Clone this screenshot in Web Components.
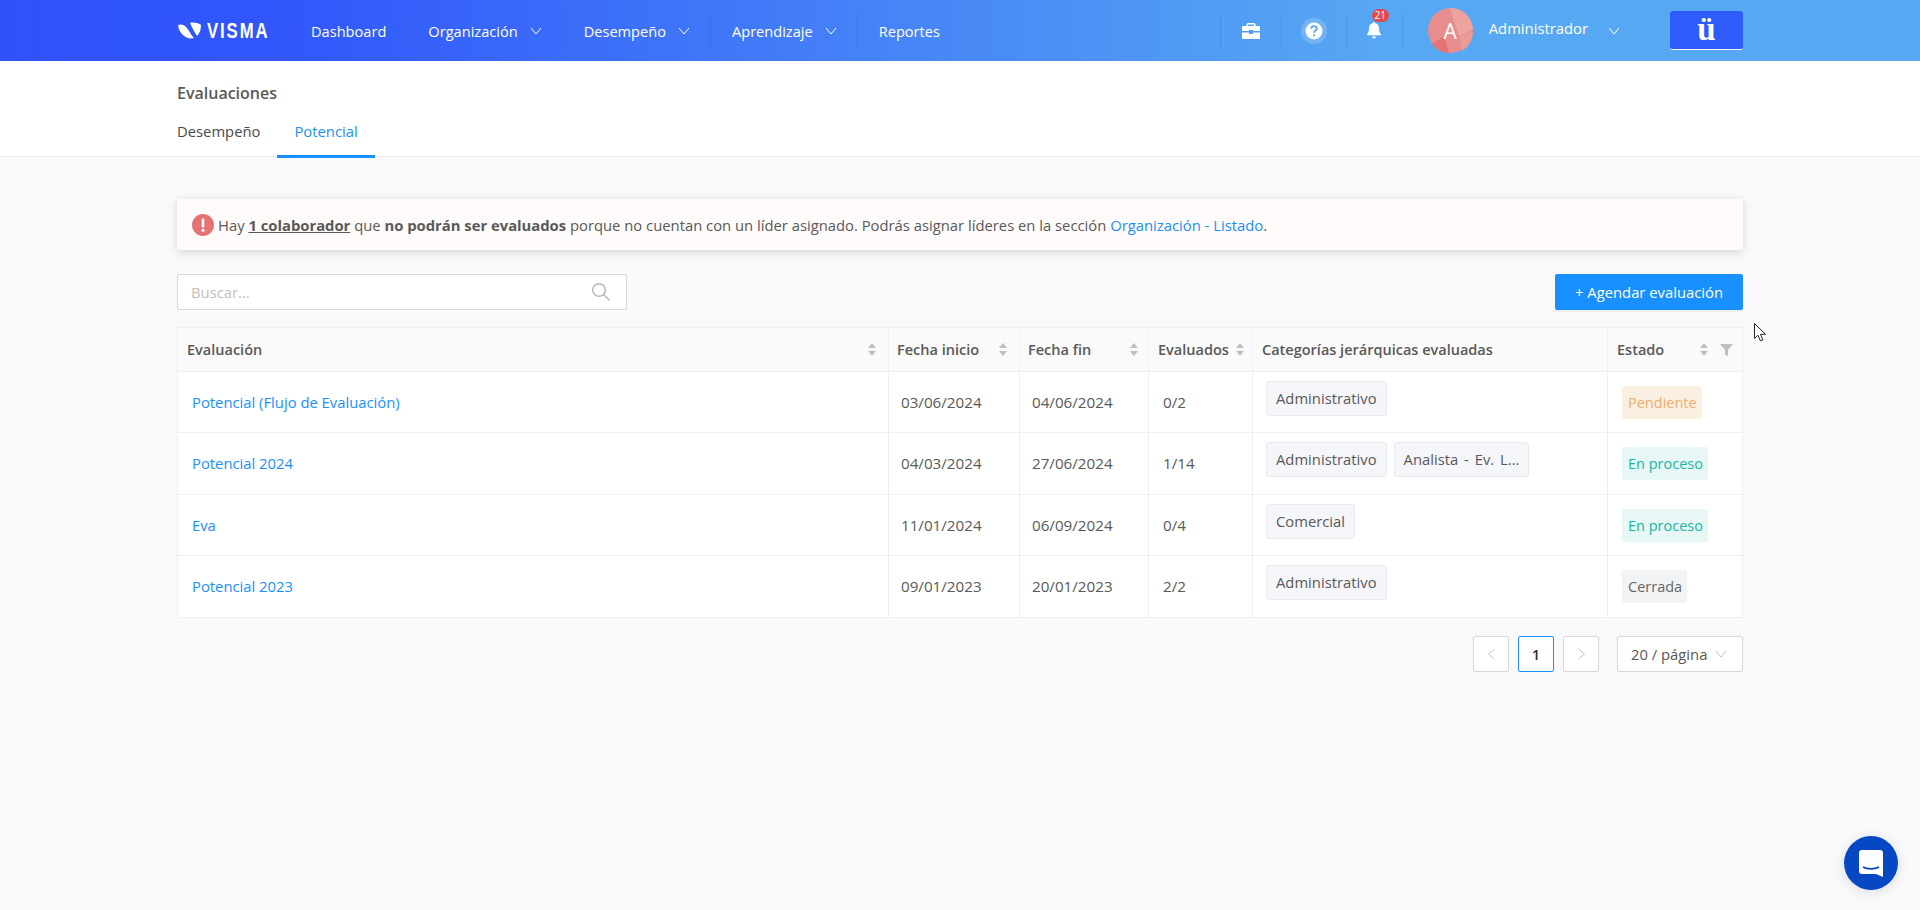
<!DOCTYPE html>
<html lang="es">
<head>
<meta charset="utf-8">
<title>Evaluaciones</title>
<style>
    html, body { margin: 0; height: 100%; }
    body {
        background: #f9f9fb;
        color: #595959;
        font-family: "Open Sans", "Noto Sans", "Liberation Sans", sans-serif;
        font-size: 14.8px;
        overflow: hidden;
    }
</style>
</head>
<body>
<app-header></app-header>
<page-title heading="Evaluaciones"></page-title>
<main-content>
    <alert-banner>
        Hay <u><b>1 colaborador</b></u> que <b>no podrán ser evaluados</b> porque no cuentan con un líder asignado. Podrás asignar líderes en la sección <a>Organización - Listado</a>.
    </alert-banner>
    <search-toolbar></search-toolbar>
    <eval-table></eval-table>
    <page-nav></page-nav>
</main-content>
<chat-fab></chat-fab>
<mouse-cursor></mouse-cursor>

<script>
const CHEVRON = `<svg width="12" height="8" viewBox="0 0 12 8" fill="none" stroke="currentColor" stroke-width="1"><path d="M1 1l5 6 5-6"/></svg>`;

//top bar with logo, menu and user box
class AppHeader extends HTMLElement {
    connectedCallback() {
        const shadow = this.attachShadow({mode: "open"});
        shadow.innerHTML = `
        <style>
            :host {
                display: flex;
                height: 61px;
                padding: 0 177px;
                align-items: center;
                color: #fff;
                background: linear-gradient(90deg, #2f51fc 0%, #3157fb 15%, #57a8f3 72%, #57a8f3 100%);
            }
            .logo { display: flex; align-items: center; gap: 5px; width: 113px; }
            .logo span {
                font: bold 22px "Liberation Sans", sans-serif;
                letter-spacing: 2.500px;
                display: inline-block;
                transform: scaleX(.76);
                transform-origin: left center;
            }
            .item {
                display: flex;
                align-items: center;
                height: 34px;
                padding: 1px 20px 0 21px;
                gap: 12px;
                border-right: 1px solid rgba(40, 80, 200, .22);
                box-sizing: border-box;
                font-size: 14.6px;
            }
            .item.end { border-right: 0; }
            .spacer { flex: 1; }
            .icon {
                width: 61px;
                height: 34px;
                display: flex;
                align-items: center;
                justify-content: center;
                border-left: 1px solid rgba(40, 80, 200, .18);
                position: relative;
                box-sizing: border-box;
            }
            .icon.bell { width: 56px; }
            .icon.help { width: 65px; }
            .badge {
                position: absolute;
                left: 25px;
                top: -5px;
                min-width: 17px;
                height: 13px;
                line-height: 13px;
                border-radius: 7px;
                background: #e5484d;
                font-size: 10px;
                text-align: center;
            }
            .user { display: flex; align-items: center; }
            .name { margin-bottom: 5px; display: flex; align-items: center; }
            .avatar { position: relative; width: 45px; height: 45px; margin-right: 16px; }
            .avatar svg { display: block; }
            .avatar span {
                position: absolute;
                inset: 0;
                display: flex;
                align-items: center;
                justify-content: center;
                font-size: 21px;
            }
            .chev { margin-left: 20px; margin-top: 6px; display: flex; }
            .uu {
                width: 73px;
                height: 39px;
                margin-left: 50px;
                box-sizing: border-box;
                background: #2f5bfb;
                border-bottom: 1px solid #fff;
                border-radius: 3px;
                font: bold 33px/36px "Liberation Serif", serif;
                text-align: center;
            }
        </style>
        <div class="logo">
            <svg width="25" height="17" viewBox="0 0 25 17"><path fill="#fff" d="M1 3C6 1 10 5 12 9c2 3 3 5 5 7C10 18 2 12 1 3z"/><path fill="#fff" d="M13 1c4-1 9 0 11 2 0 4-1 8-4 11-3-4-5-9-7-13z"/></svg>
            <span>VISMA</span>
        </div>
        <div class="item">Dashboard</div>
        <div class="item">Organización ${CHEVRON}</div>
        <div class="item">Desempeño ${CHEVRON}</div>
        <div class="item">Aprendizaje ${CHEVRON}</div>
        <div class="item end">Reportes</div>
        <div class="spacer"></div>
        <div class="icon">
            <svg width="18" height="16" viewBox="0 0 18 16"><path fill="#fff" d="M6 0h6a1.5 1.5 0 0 1 1.5 1.5V3H17a1 1 0 0 1 1 1v4H11V7H7v1H0V4a1 1 0 0 1 1-1h3.500V1.500A1.500 1.500 0 0 1 6 0zm0 1.500V3h6V1.500H6zM0 9.500h7V11h4V9.500h7V15a1 1 0 0 1-1 1H1a1 1 0 0 1-1-1z"/></svg>
        </div>
        <div class="icon help">
            <svg width="28" height="28" viewBox="0 0 28 28"><circle cx="14" cy="14" r="13" fill="#fff" opacity=".18"/><circle cx="14" cy="14" r="8.500" fill="#fff"/><path fill="none" stroke="#57a8f3" stroke-width="1.800" d="M11.200 11.800c0-3.600 5.700-3.600 5.700-.2 0 2-2.900 2-2.900 4.200"/><circle cx="14" cy="18.300" r="1.100" fill="#57a8f3"/></svg>
        </div>
        <div class="icon bell">
            <svg width="14" height="17" viewBox="0 0 14 17"><path fill="#fff" d="M7 0a1 1 0 0 1 1 1.100c2.600.5 4 2.600 4 5.100 0 3 .6 4.500 2 6v1H0v-1c1.400-1.500 2-3 2-6 0-2.500 1.400-4.600 4-5.100A1 1 0 0 1 7 0zM5 14.500h4a2 2 0 0 1-4 0z"/></svg>
            <span class="badge">21</span>
        </div>
        <div class="icon" style="width:26px"></div>
        <div class="user">
            <div class="avatar">
                <svg width="45" height="45" viewBox="0 0 45 45">
                    <circle cx="22.500" cy="22.500" r="22.500" fill="#e88d8d"/>
                    <path fill="#eda3a0" d="M22 0a22.500 22.500 0 0 1 23 22l-14 6z"/>
                    <path fill="#e57373" d="M4 36l12-8 5 17A22.500 22.500 0 0 1 4 36z"/>
                    <path fill="#ea9a98" d="M31 28l14-4a22.500 22.500 0 0 1-11 19z"/>
                </svg>
                <span>A</span>
            </div>
            <div class="name">Administrador<span class="chev">${CHEVRON}</span></div>
        </div>
        <div class="uu">ü</div>`;
    }
}

//white strip with page name and tabs
class PageTitle extends HTMLElement {
    connectedCallback() {
        const shadow = this.attachShadow({mode: "open"});
        shadow.innerHTML = `
        <style>
            :host {
                display: block;
                height: 96px;
                box-sizing: border-box;
                padding: 20px 177px 0;
                background: #fff;
                border-bottom: 1px solid #ececf2;
            }
            h1 { margin: 0; font-size: 16px; line-height: 24px; font-weight: 600; color: #595959; }
            .tabs { display: flex; margin-top: 15px; height: 37px; }
            .tab { padding: 0 17px; line-height: 23px; color: #4a4a4a; box-sizing: border-box; }
            .tab:first-child { padding-left: 0; padding-right: 17px; }
            .tab.active { color: #1890ff; border-bottom: 3px solid #1890ff; height: 38px; }
        </style>
        <h1>${this.getAttribute("heading")}</h1>
        <div class="tabs">
            <div class="tab">Desempeño</div>
            <div class="tab active">Potencial</div>
        </div>`;
    }
}

class MainContent extends HTMLElement {
    connectedCallback() {
        const shadow = this.attachShadow({mode: "open"});
        shadow.innerHTML = `
        <style>
            :host { display: flex; flex-direction: column; padding: 42px 177px 0; }
        </style>
        <slot></slot>`;
    }
}

class AlertBanner extends HTMLElement {
    connectedCallback() {
        const shadow = this.attachShadow({mode: "open"});
        shadow.innerHTML = `
        <style>
            :host {
                display: flex;
                align-items: center;
                gap: 4px;
                height: 51px;
                padding: 0 15px;
                box-sizing: border-box;
                background: #fffbfb;
                border-radius: 2px;
                box-shadow: 0 2px 8px rgba(0, 0, 0, .15);
                color: #595959;
            }
            ::slotted(a) { color: #1890ff; }
            .text { margin-top: 1px; }
        </style>
        <svg width="22" height="22" viewBox="0 0 22 22"><circle cx="11" cy="11" r="11" fill="#e57373"/><rect x="9.700" y="4.500" width="2.600" height="9" rx="1.200" fill="#fff"/><circle cx="11" cy="16.300" r="1.500" fill="#fff"/></svg>
        <div class="text"><slot></slot></div>`;
    }
}

class SearchToolbar extends HTMLElement {
    connectedCallback() {
        const shadow = this.attachShadow({mode: "open"});
        shadow.innerHTML = `
        <style>
            :host { display: flex; justify-content: space-between; margin-top: 24px; height: 36px; }
            .search {
                width: 450px;
                height: 36px;
                box-sizing: border-box;
                padding: 0 15px 0 13px;
                background: #fff;
                border: 1px solid #d9d9d9;
                border-radius: 2px;
                display: flex;
                align-items: center;
                justify-content: space-between;
                color: #bfbfbf;
            }
            button {
                width: 188px;
                height: 36px;
                border: 0;
                border-radius: 2px;
                background: #1890ff;
                color: #fff;
                font: inherit;
                box-shadow: 0 2px 0 rgba(0, 0, 0, .04);
            }
        </style>
        <div class="search">
            <span>Buscar...</span>
            <svg width="20" height="20" viewBox="0 0 20 20" fill="none" stroke="#b5b5b5" stroke-width="1.400"><circle cx="8" cy="8" r="6.300"/><path d="M12.600 12.600l6 6"/></svg>
        </div>
        <button>+ Agendar evaluación</button>`;
    }
}

class CatTag extends HTMLElement {
    connectedCallback() {
        const shadow = this.attachShadow({mode: "open"});
        shadow.innerHTML = `
        <style>
            :host {
                display: inline-block;
                height: 35px;
                line-height: 33px;
                padding: 0 9px;
                box-sizing: border-box;
                background: #f5f6f9;
                border: 1px solid #e8e9ef;
                border-radius: 3px;
                color: #595959;
                word-spacing: 2px;
            }
        </style>
        <slot></slot>`;
    }
}

const STATUS_COLORS = {
    pendiente: ["#faf0e2", "#f0ad6c"],
    proceso: ["#e6f7f5", "#19b5a5"],
    cerrada: ["#f2f3f5", "#666"],
};

class StatusTag extends HTMLElement {
    connectedCallback() {
        const [bg, fg] = STATUS_COLORS[this.getAttribute("kind")];
        const shadow = this.attachShadow({mode: "open"});
        shadow.innerHTML = `
        <style>
            :host {
                display: inline-block;
                height: 33px;
                line-height: 33px;
                padding: 0 5px 0 6px;
                background: ${bg};
                color: ${fg};
                border-radius: 3px;
                font-size: 14.5px;
            }
        </style>
        <slot></slot>`;
    }
}

const ROWS = [
    {name: "Potencial (Flujo de Evaluación)", start: "03/06/2024", end: "04/06/2024", done: "0/2", cats: ["Administrativo"], kind: "pendiente", status: "Pendiente"},
    {name: "Potencial 2024", start: "04/03/2024", end: "27/06/2024", done: "1/14", cats: ["Administrativo", "Analista - Ev. L..."], kind: "proceso", status: "En proceso"},
    {name: "Eva", start: "11/01/2024", end: "06/09/2024", done: "0/4", cats: ["Comercial"], kind: "proceso", status: "En proceso"},
    {name: "Potencial 2023", start: "09/01/2023", end: "20/01/2023", done: "2/2", cats: ["Administrativo"], kind: "cerrada", status: "Cerrada"},
];

const SORT = `<svg class="sort" width="10" height="15" viewBox="0 0 10 15"><path fill="#bfbfbf" d="M5 1l4 5H1zM5 14l4-5H1z"/></svg>`;
const FILTER = `<svg width="13" height="12" viewBox="0 0 13 12"><path fill="#bfbfbf" d="M0 0h13L8 6v6L5 10.500V6z"/></svg>`;

class EvalTable extends HTMLElement {
    connectedCallback() {
        const shadow = this.attachShadow({mode: "open"});
        const heads = [
            ["Evaluación", SORT, "c1"],
            ["Fecha inicio", SORT, "c2"],
            ["Fecha fin", SORT, "c3"],
            ["Evaluados", SORT, "c4"],
            ["Categorías jerárquicas evaluadas", "", "c5"],
            ["Estado", SORT + FILTER, "c6"],
        ];
        const headHtml = heads.map(([label, icons, cls]) =>
            `<div class="th ${cls}"><span>${label}</span><span class="icons">${icons}</span></div>`).join("");
        const rowsHtml = ROWS.map(row => `
            <div class="td first"><a>${row.name}</a></div>
            <div class="td num">${row.start}</div>
            <div class="td num">${row.end}</div>
            <div class="td num done">${row.done}</div>
            <div class="td tags">${row.cats.map(c => `<cat-tag>${c}</cat-tag>`).join("")}</div>
            <div class="td st"><status-tag kind="${row.kind}">${row.status}</status-tag></div>`).join("");
        shadow.innerHTML = `
        <style>
            :host {
                display: grid;
                grid-template-columns: 711px 131px 129px 104px 355px 1fr;
                grid-template-rows: 44px 61px 62px 61px 62px;
                margin-top: 17px;
                height: 290px;
                border: solid #eeeff3;
                border-width: 1px 0 0 1px;
                box-sizing: border-box;
                color: #595959;
            }
            .th, .td {
                border: solid #eeeff3;
                border-width: 0 1px 1px 0;
                box-sizing: border-box;
                display: flex;
                align-items: center;
            }
            .th {
                justify-content: space-between;
                padding: 0 11px 0 9px;
                background: #fafafb;
                font-weight: 600;
                font-size: 14.5px;
            }
            .th.c2 { padding-left: 8px; }
            .th.c3 { padding-left: 8px; padding-right: 9px; }
            .th.c4 { padding-right: 7px; }
            .th.c6 { padding-right: 9px; }
            .icons { display: flex; align-items: center; gap: 11px; }
            .td { padding-left: 12px; background: #fff; }
            .td.first { padding-left: 14px; padding-bottom: 1px; }
            .td.num { font-size: 15.2px; padding-bottom: 1px; }
            .td.done { padding-left: 14px; }
            a { color: #1890ff; }
            .td.tags { align-items: flex-start; padding: 9px 0 0 13px; gap: 7px; }
            .td.st { padding-left: 14px; }
        </style>
        ${headHtml}
        ${rowsHtml}`;
    }
}

class PageNav extends HTMLElement {
    connectedCallback() {
        const shadow = this.attachShadow({mode: "open"});
        shadow.innerHTML = `
        <style>
            :host { display: flex; justify-content: flex-end; margin-top: 19px; height: 36px; gap: 9px; }
            .box {
                width: 36px;
                height: 36px;
                box-sizing: border-box;
                background: #fff;
                border: 1px solid #d9d9d9;
                border-radius: 2px;
                display: flex;
                align-items: center;
                justify-content: center;
                color: #c4c4c4;
            }
            .current { border-color: #1890ff; color: #333; font-weight: 600; }
            .select {
                width: 126px;
                margin-left: 9px;
                justify-content: flex-start;
                padding-left: 13px;
                gap: 8px;
                color: #595959;
            }
            .select svg { color: #bfbfbf; }
        </style>
        <div class="box"><svg width="9" height="12" viewBox="0 0 9 12" fill="none" stroke="currentColor"><path d="M7.500 1L1.500 6l6 5"/></svg></div>
        <div class="box current">1</div>
        <div class="box"><svg width="9" height="12" viewBox="0 0 9 12" fill="none" stroke="currentColor"><path d="M1.500 1l6 5-6 5"/></svg></div>
        <div class="box select">20 / página ${CHEVRON}</div>`;
    }
}

class ChatFab extends HTMLElement {
    connectedCallback() {
        const shadow = this.attachShadow({mode: "open"});
        shadow.innerHTML = `
        <style>
            :host {
                position: fixed;
                left: 1844px;
                top: 836px;
                width: 54px;
                height: 54px;
                border-radius: 50%;
                background: #0648c4;
                box-shadow: 0 2px 12px rgba(0, 0, 0, .12);
                display: flex;
                align-items: center;
                justify-content: center;
            }
        </style>
        <svg width="24" height="27" viewBox="0 0 24 27"><path fill="#fff" d="M3 0h18a3 3 0 0 1 3 3v24l-7-3H3a3 3 0 0 1-3-3V3a3 3 0 0 1 3-3z"/><path fill="none" stroke="#0648c4" stroke-width="1.600" d="M4 17c4 2.500 12 2.500 16 0"/></svg>`;
    }
}

//the mouse pointer caught in the screenshot
class MouseCursor extends HTMLElement {
    connectedCallback() {
        const shadow = this.attachShadow({mode: "open"});
        shadow.innerHTML = `
        <style>
            :host { position: fixed; left: 1754px; top: 323px; width: 13px; height: 19px; }
        </style>
        <svg width="13" height="19" viewBox="0 0 13 19"><path fill="#fff" stroke="#222" d="M.5.500v15l3.500-3.300 2.400 5.600 2.500-1-2.400-5.500h5z"/></svg>`;
    }
}

customElements.define("app-header", AppHeader);
customElements.define("page-title", PageTitle);
customElements.define("main-content", MainContent);
customElements.define("alert-banner", AlertBanner);
customElements.define("search-toolbar", SearchToolbar);
customElements.define("cat-tag", CatTag);
customElements.define("status-tag", StatusTag);
customElements.define("eval-table", EvalTable);
customElements.define("page-nav", PageNav);
customElements.define("chat-fab", ChatFab);
customElements.define("mouse-cursor", MouseCursor);
</script>
</body>
</html>
